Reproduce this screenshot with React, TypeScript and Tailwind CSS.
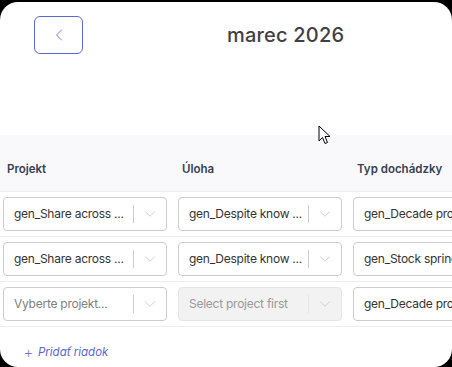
import { ChevronLeft, ChevronDown } from "lucide-react";

type Cell = { value?: string; placeholder?: string; disabled?: boolean; plain?: boolean };

const rows: Cell[][] = [
  [
    { value: "gen_Share across ..." },
    { value: "gen_Despite know ..." },
    { value: "gen_Decade pro", plain: true },
  ],
  [
    { value: "gen_Share across ..." },
    { value: "gen_Despite know ..." },
    { value: "gen_Stock spring", plain: true },
  ],
  [
    { placeholder: "Vyberte projekt..." },
    { placeholder: "Select project first", disabled: true },
    { value: "gen_Decade pro", plain: true },
  ],
];

function SelectBox({ cell }: { cell: Cell }) {
  if (cell.plain) {
    return (
      <div className="h-[34px] w-[164px] rounded-[4px] border border-[#cccccc] bg-white flex items-center pl-[10px] overflow-hidden whitespace-nowrap text-[12px] tracking-[-0.25px] text-[#333333]">
        {cell.value}
      </div>
    );
  }
  return (
    <div
      className={`h-[34px] w-[164px] rounded-[4px] border flex items-center ${
        cell.disabled ? "bg-[#f2f2f2] border-[#e6e6e6]" : "bg-white border-[#cccccc]"
      }`}
    >
      <div
        className={`flex-1 min-w-0 pl-[10px] overflow-hidden whitespace-nowrap text-[12px] tracking-[-0.25px] ${
          cell.value ? "text-[#333333]" : cell.disabled ? "text-[#999999]" : "text-[#808080]"
        }`}
      >
        {cell.value ?? cell.placeholder}
      </div>
      <span className={`w-px h-[18px] ${cell.disabled ? "bg-[#e6e6e6]" : "bg-[#cccccc]"}`} />
      <div className="w-[32px] flex justify-center">
        <ChevronDown size={18} strokeWidth={1.25} className="text-[#cccccc]" />
      </div>
    </div>
  );
}

export default function App() {
  return (
    <div className="w-[452px] h-[367px] bg-black overflow-hidden" style={{ fontFamily: "Inter, 'Noto Sans', sans-serif" }}>
      <div className="relative mt-[2px] h-[365px] bg-white rounded-[18px] overflow-hidden">
        <div className="flex items-center h-[52px] pt-[14px]">
          <button className="ml-[34px] w-[49px] h-[38px] rounded-[6px] border border-[#5a67d8] flex items-center justify-center">
            <ChevronLeft size={20} strokeWidth={1} className="text-[#5a67d8]" />
          </button>
          <h1 className="ml-[144px] text-[20px] font-medium text-[#3f3f46] tracking-[0.2px]">marec 2026</h1>
        </div>

        <div className="mt-[81px]">
          <div className="flex h-[57px] bg-[#f9f9fb] border-b border-[#eeeeee] items-end pb-[13px] whitespace-nowrap">
            <div className="w-[175px] shrink-0 pl-[7px] text-[11.5px] font-semibold text-[#374151]">Projekt</div>
            <div className="w-[175px] shrink-0 pl-[7px] text-[11.5px] font-semibold text-[#374151]">Úloha</div>
            <div className="w-[175px] shrink-0 pl-[7px] text-[11.5px] font-semibold text-[#374151]">Typ dochádzky</div>
          </div>
          {rows.map((row, i) => (
            <div key={i} className="flex py-[5px] border-b border-[#eeeeee]">
              {row.map((cell, j) => (
                <div key={j} className="w-[175px] shrink-0 pl-[3px]">
                  <SelectBox cell={cell} />
                </div>
              ))}
            </div>
          ))}
          <div className="mt-[17px] pl-[23px] flex items-center gap-[4px] text-[11.5px] italic text-[#5a67d8]">
            <span className="text-[17px] not-italic font-extralight leading-none">+</span>
            <span>Pridať riadok</span>
          </div>
        </div>

        <svg className="absolute left-[318px] top-[123px]" width="14" height="20" viewBox="0 0 14 20">
          <path d="M1 1 L1 16 L4.5 12.5 L7 18.5 L9.5 17.5 L7 11.5 L12 11.5 Z" fill="white" stroke="black" strokeWidth="1" />
        </svg>
      </div>
    </div>
  );
}
